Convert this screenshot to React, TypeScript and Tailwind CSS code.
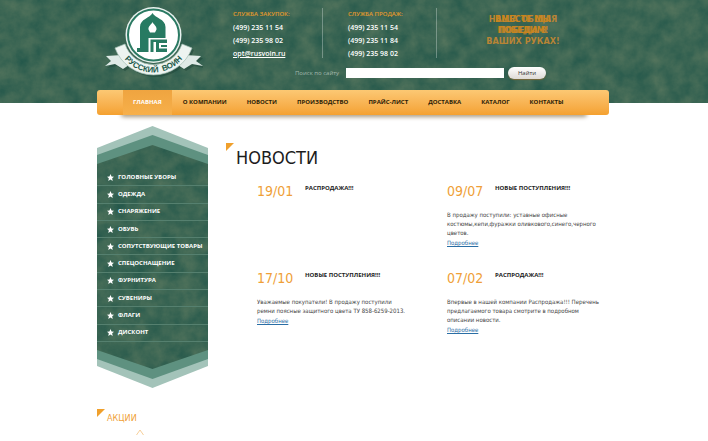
import type { ReactNode } from 'react';

const navItems = ['О КОМПАНИИ', 'НОВОСТИ', 'ПРОИЗВОДСТВО', 'ПРАЙС-ЛИСТ', 'ДОСТАВКА', 'КАТАЛОГ', 'КОНТАКТЫ'];

const categories = [
  'ГОЛОВНЫЕ УБОРЫ',
  'ОДЕЖДА',
  'СНАРЯЖЕНИЕ',
  'ОБУВЬ',
  'СОПУТСТВУЮЩИЕ ТОВАРЫ',
  'СПЕЦОСНАЩЕНИЕ',
  'ФУРНИТУРА',
  'СУВЕНИРЫ',
  'ФЛАГИ',
  'ДИСКОНТ',
];

type NewsItem = { date: string; title: string; text?: string };

const news: NewsItem[] = [
  { date: '19/01', title: 'РАСПРОДАЖА!!!' },
  {
    date: '09/07',
    title: 'НОВЫЕ ПОСТУПЛЕНИЯ!!!',
    text: 'В продажу поступили: уставные офисные костюмы,кепи,фуражки оливкового,синего,черного цветов.',
  },
  {
    date: '17/10',
    title: 'НОВЫЕ ПОСТУПЛЕНИЯ!!!',
    text: 'Уважаемые покупатели! В продажу поступили ремни поясные защитного цвета ТУ 858-6259-2013.',
  },
  {
    date: '07/02',
    title: 'РАСПРОДАЖА!!!',
    text: 'Впервые в нашей компании Распродажа!!! Перечень предлагаемого товара смотрите в подробном описании новости.',
  },
];

function Camouflage({ id }: { id: string }) {
  return (
    <svg className="absolute inset-0 h-full w-full" aria-hidden="true">
      <filter id={id} x="0" y="0" width="100%" height="100%" colorInterpolationFilters="sRGB">
        <feTurbulence type="fractalNoise" baseFrequency="0.06" numOctaves="5" seed="8" />
        <feColorMatrix values="0.22 0 0 0 0.125  0.13 0 0 0 0.335  0.08 0 0 0 0.288  0 0 0 0 1" />
      </filter>
      <rect width="100%" height="100%" filter={`url(#${id})`} />
    </svg>
  );
}

function Logo() {
  return (
    <svg viewBox="0 0 98 74" className="h-[74px] w-[98px]" role="img" aria-label="Русский воин">
      <g fill="#1d4437" opacity=".5" transform="translate(2 2)">
        <path d="M1 51 L17 50 L24 60 L18 64 L10 59 L0 61 L6 56 Z" />
        <path d="M96 51 L80 50 L73 60 L79 64 L87 59 L98 61 L91 56 Z" />
        <path d="M10 43 L20 39 A30 30 0 0 0 77 39 L87 43 A41 41 0 0 1 10 43 Z" />
      </g>
      <path d="M1 51 L17 50 L24 60 L18 64 L10 59 L0 61 L6 56 Z" fill="#dfeae6" />
      <path d="M96 51 L80 50 L73 60 L79 64 L87 59 L98 61 L91 56 Z" fill="#dfeae6" />
      <circle cx="48.500" cy="30" r="28" fill="#e9f1ee" />
      <circle cx="48.500" cy="30" r="25.500" fill="#fff" stroke="#2b7a63" strokeWidth="2" />
      <path
        d="M10 43 L20 39 A30 30 0 0 0 77 39 L87 43 A41 41 0 0 1 10 43 Z"
        fill="#eef4f1"
        stroke="#a3beb4"
        strokeWidth=".7"
      />
      <path
        fillRule="evenodd"
        d="M47.500 8 C45 13 35 14 35 22 V43 H32 V47 H43.500 V33 H60.500 V22 C60.500 14 50 13 47.500 8 Z M47.500 17 C48.500 19.500 52 21 51.500 24.500 L50 27.500 H45 L43.500 24.500 C43 21 46.500 19.500 47.500 17 Z"
        fill="#277a62"
      />
      <path d="M45.500 34.500 H62 V38 H54 V43.500 H62 V47 H51 V37 H48.500 V47 H45.500 Z M56 40 H62 V42 H56 Z" fill="#277a62" />
      <path id="ribbon" d="M11 30 A37.500 37.500 0 0 0 86 30" fill="none" />
      <text fill="#20594a" className="font-['Liberation_Sans',sans-serif] text-[8px] font-bold">
        <textPath href="#ribbon" startOffset="50%" textAnchor="middle">
          {'РУССКИЙ\u00a0\u00a0ВОИН'}
        </textPath>
      </text>
    </svg>
  );
}

function Contact({ title, className, children }: { title: string; className: string; children: ReactNode }) {
  return (
    <section className={`h-[50px] text-[7px] leading-[13px] font-semibold text-white ${className}`}>
      <h2 className="text-[6px] leading-[13px] text-[#e79a2b]">{title}</h2>
      {children}
    </section>
  );
}

function Corner() {
  return <span className="size-[8px] shrink-0 bg-[#f0a02c] [clip-path:polygon(0_0,100%_0,0_100%)]" />;
}

function Star() {
  return (
    <svg viewBox="0 0 10 10" className="size-[7px] shrink-0" fill="#fff" aria-hidden="true">
      <path d="M5 0 L6.500 3.400 L10 3.800 L7.400 6.200 L8.100 10 L5 8 L1.900 10 L2.600 6.200 L0 3.800 L3.500 3.400 Z" />
    </svg>
  );
}

function Sidebar() {
  return (
    <aside className="relative w-[111px] shrink-0 pt-[43px] pb-[46px]">
      <div className="absolute inset-0 bg-[#a3c3b9] [clip-path:polygon(50%_0,100%_22px,100%_calc(100%-22px),50%_100%,0_calc(100%-22px),0_22px)]" />
      <div className="absolute inset-x-0 inset-y-[9px] bg-[#5e9180] [clip-path:polygon(50%_0,100%_20px,100%_calc(100%-20px),50%_100%,0_calc(100%-20px),0_20px)]" />
      <div className="absolute inset-x-0 inset-y-[19px] [clip-path:polygon(50%_0,100%_19px,100%_calc(100%-19px),50%_100%,0_calc(100%-19px),0_19px)]">
        <Camouflage id="camo-menu" />
      </div>
      <ul className="relative flex h-[173px] flex-col">
        {categories.map((name) => (
          <li key={name} className="flex flex-1 items-center border-b border-[#55806f] pl-[10px]">
            <a href="#" className="flex items-center gap-[4px] text-[6px] font-bold whitespace-nowrap text-white">
              <Star />
              {name}
            </a>
          </li>
        ))}
      </ul>
    </aside>
  );
}

function NewsCard({ item }: { item: NewsItem }) {
  return (
    <article className="min-h-[87px]">
      <header className="flex h-[27px] gap-[11px]">
        <time className="w-[37px] text-[14px] leading-[16px] text-[#ef9f38]">{item.date}</time>
        <h2 className="font-['Open_Sans',sans-serif] text-[6px] leading-[11px] font-bold text-[#222]">{item.title}</h2>
      </header>
      {item.text && (
        <>
          <p className="w-[153px] text-[6px] leading-[9px] text-[#444]">{item.text}</p>
          <a href="#" className="block text-[6px] leading-[11px] text-[#2a6ea5] underline">
            Подробнее
          </a>
        </>
      )}
    </article>
  );
}

export default function App() {
  return (
    <div className="min-h-screen overflow-hidden bg-white font-['Open_Sans',sans-serif]">
      <header className="relative h-[103px]">
        <Camouflage id="camo-header" />
        <div className="relative mx-auto flex w-[514px] pr-[2px]">
          <a href="#" className="mt-[5px] ml-[8px] block w-[128px] shrink-0">
            <Logo />
          </a>
          <div className="mt-[8px] flex flex-1 flex-col">
            <div className="flex">
              <Contact title="СЛУЖБА ЗАКУПОК:" className="w-[89px]">
                <p>(499) 235 11 54</p>
                <p>(499) 235 98 02</p>
                <a href="mailto:opt@rusvoin.ru" className="block underline">
                  opt@rusvoin.ru
                </a>
              </Contact>
              <Contact title="СЛУЖБА ПРОДАЖ:" className="w-[114px] border-l border-white/30 pl-[25px]">
                <p>(499) 235 11 54</p>
                <p>(499) 235 11 84</p>
                <p>(499) 235 98 02</p>
              </Contact>
              <div className="flex h-[50px] flex-1 justify-center border-l border-white/30 pt-[6px] font-['DejaVu_Sans_Condensed',sans-serif] text-[9px] leading-[11px] font-bold text-[#b88435]">
                <div className="relative text-center whitespace-nowrap">
                  <p>НАША ОБЩАЯ</p>
                  <p>ПОБЕДА В</p>
                  <p>ВАШИХ РУКАХ!</p>
                  <div className="absolute inset-x-0 top-0 text-[#c9851d]">
                    <p>ВМЕСТЕ МЫ</p>
                    <p>ПОБЕДИМ!</p>
                  </div>
                </div>
              </div>
            </div>
            <form className="mt-[9px] ml-[62px] flex items-center">
              <label htmlFor="search" className="w-[51px] text-[6px] text-[#a3b8ac]">
                Поиск по сайту
              </label>
              <input id="search" type="text" className="h-[10px] w-[158px] bg-white px-1 text-[6px]" />
              <button
                type="button"
                className="ml-[4px] h-[12px] w-[38px] rounded-full bg-linear-to-b from-white to-[#dedad6] text-[6px] leading-[12px] text-[#333] shadow-[0_1px_1px_#7a6a3a]"
              >
                Найти
              </button>
            </form>
          </div>
        </div>
      </header>

      <div className="relative mx-auto -mt-[13px] w-[514px] pr-[2px]">
        <div className="absolute inset-x-[24px] bottom-0 h-[6px] rounded-full shadow-[0_2px_4px_#a89a80]" />
        <nav className="relative flex h-[25px] rounded-[3px] bg-linear-to-b from-[#fcc873] to-[#f4a12f] pl-[26px] text-[6px] leading-[25px] font-bold text-[#2b1c08]">
          <a href="#" className="mr-px bg-linear-to-b from-[#efa440] to-[#f7b04a] px-[10px] text-white">
            ГЛАВНАЯ
          </a>
          {navItems.map((name) => (
            <a key={name} href="#" className="px-[10px]">
              {name}
            </a>
          ))}
        </nav>
      </div>

      <div className="mx-auto mt-[11px] flex w-[514px] pr-[2px] font-['DejaVu_Sans_Condensed','DejaVu_Sans',sans-serif]">
        <div className="shrink-0 font-['Open_Sans',sans-serif]">
          <Sidebar />
          <section className="mt-[21px]">
            <h2 className="flex gap-[2px] font-['DejaVu_Sans_Condensed',sans-serif] text-[9px] leading-[18px] text-[#ef9f38]">
              <Corner />
              АКЦИИ
            </h2>
            <svg viewBox="0 0 8 6" className="mt-[2px] ml-[39px] h-[6px] w-[8px]" fill="none" stroke="#f6cf9a" aria-hidden="true">
              <path d="M0.500 6 L4 1 L7.500 6" />
            </svg>
          </section>
        </div>
        <main className="mt-[17px] ml-[18px] flex-1">
          <div className="flex gap-[2px]">
            <Corner />
            <h1 className="mt-[3px] text-[18px] leading-[24px] text-[#1c1c1c]">НОВОСТИ</h1>
          </div>
          <div className="mt-[13px] ml-[31px] grid grid-cols-[190px_auto]">
            {news.map((item) => (
              <NewsCard key={item.date} item={item} />
            ))}
          </div>
        </main>
      </div>
    </div>
  );
}
